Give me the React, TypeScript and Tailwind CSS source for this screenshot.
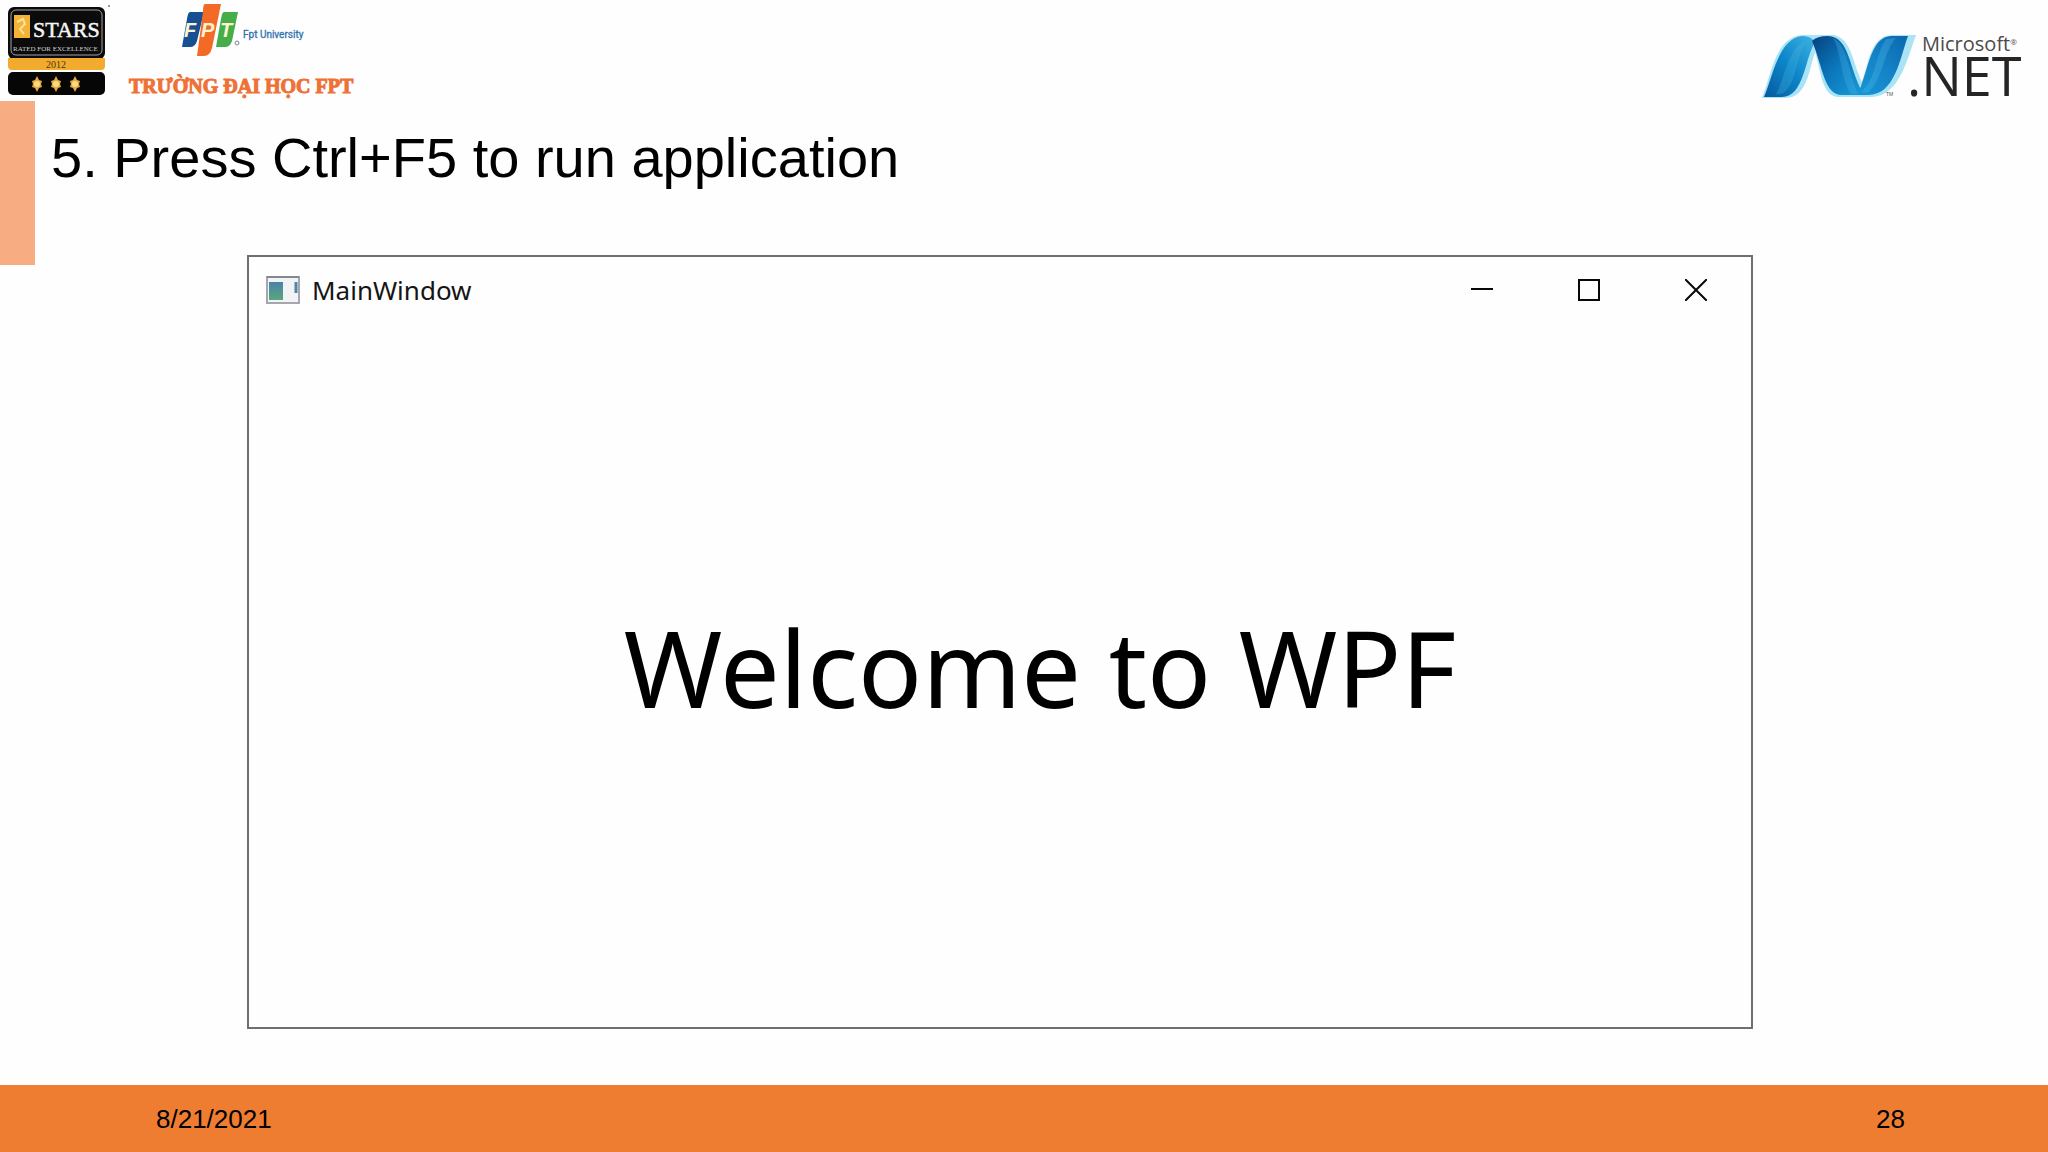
import type { ReactNode } from "react";

const slide = {
  heading: "5. Press Ctrl+F5 to run application",
  date: "8/21/2021",
  page: 28,
};

function StarsBadge() {
  return (
    <svg viewBox="0 0 112 100" className="h-[100px] w-28 shrink-0" role="img" aria-label="Stars rated for excellence 2012">
      <rect x="8" y="7" width="97" height="52" rx="6" fill="#0b0b0b" />
      <rect x="11" y="10" width="91" height="45" rx="5" fill="none" stroke="#a3a3a3" strokeWidth="1" />
      <rect x="14" y="15" width="16" height="23" fill="#f5b335" />
      <path d="M17 22l6-3 2 5-5 5 4 5" fill="none" stroke="#fbe2a4" strokeWidth="2" />
      <text x="33" y="37" fontFamily="Liberation Serif, serif" fontSize="22" fill="#f5f5f5" stroke="#f5f5f5" strokeWidth="0.5">STARS</text>
      <text x="13" y="51" fontFamily="Liberation Serif, serif" fontSize="7" fill="#cfcfcf">RATED FOR EXCELLENCE</text>
      <path d="M8 58h97v8q0 4-4 4H12q-4 0-4-4z" fill="#f3ab2e" />
      <text x="46" y="68" fontFamily="Liberation Serif, serif" fontSize="10" fill="#4a3510">2012</text>
      <rect x="8" y="72" width="97" height="23" rx="5" fill="#060606" />
      {[37, 56, 75].map((x) => (
        <g key={x} transform={`translate(${x} 84)`}>
          <path d="M0-8l2 4 3 1-1 3 1 3-3 1-2 4-2-4-3-1 1-3-1-3 3-1z" fill="#e9a93a" />
          <circle r="3" fill="#f9dc86" />
        </g>
      ))}
      <circle cx="109" cy="6" r="1" fill="#777777" />
    </svg>
  );
}

function FptLogo() {
  return (
    <svg viewBox="112 0 260 104" className="h-[104px] w-[260px] shrink-0" role="img" aria-label="FPT University">
      <path d="M190 12h14l-7 29q-2 6-7 6h-8l5-28q1-7 3-7z" fill="#164f92" />
      <path d="M224 12h14l-6 29q-2 6-7 6h-9l5-28q1-7 3-7z" fill="#45ad49" />
      <path d="M205 4h16l-9 44q-2 8-8 8h-7l6-44q0-8 2-8z" fill="#f26a26" />
      <g fontFamily="Liberation Sans, sans-serif" fontWeight="700" fontStyle="italic" fontSize="20" fill="#fdf4cf">
        <text x="184" y="37">F</text>
        <text x="201" y="37">P</text>
        <text x="220" y="37">T</text>
      </g>
      <circle cx="237" cy="43" r="2" fill="none" stroke="#7a8793" strokeWidth="1" />
      <text x="243" y="38" fontFamily="Roboto, sans-serif" fontSize="10" fill="#2f74ad" stroke="#2f74ad" strokeWidth="0.3">Fpt University</text>
      <text
        x="129"
        y="93"
        fontFamily="Liberation Serif, serif"
        fontWeight="700"
        fontSize="20"
        fill="#ee7135"
        stroke="#ee7135"
        strokeWidth="1"
      >
        TRƯỜNG ĐẠI HỌC FPT
      </text>
    </svg>
  );
}

function DotNetLogo() {
  return (
    <svg viewBox="1760 20 270 100" className="h-[100px] w-[270px] shrink-0" role="img" aria-label="Microsoft .NET">
      <defs>
        <linearGradient id="ribbonLeft" x1="0" y1="1" x2="1" y2="0">
          <stop offset="0" stopColor="#08589f" />
          <stop offset="0.5" stopColor="#0c86c9" />
          <stop offset="1" stopColor="#3fb2e2" />
        </linearGradient>
        <linearGradient id="ribbonMiddle" x1="0" y1="0" x2="1" y2="1">
          <stop offset="0" stopColor="#06417f" />
          <stop offset="0.5" stopColor="#0b78bd" />
          <stop offset="1" stopColor="#1c9bd6" />
        </linearGradient>
        <linearGradient id="ribbonRight" x1="0" y1="1" x2="1" y2="0">
          <stop offset="0" stopColor="#1597d5" />
          <stop offset="0.5" stopColor="#1583c7" />
          <stop offset="1" stopColor="#0a67ae" />
        </linearGradient>
      </defs>
      {/* pale edges behind the ribbon */}
      <path d="M1762 98C1771 76 1775 36 1803 35H1833C1852 38 1852 62 1862 82C1869 63 1870 36 1892 35H1916C1908 56 1900 97 1871 97H1838C1822 96 1821 72 1815 52C1808 75 1806 97 1786 98z" fill="#a9e3f6" />
      <path d="M1764 97C1773 76 1779 37 1803 36Q1811 36 1815 42C1805 58 1804 97 1782 97z" fill="url(#ribbonLeft)" />
      <path d="M1776 94C1786 76 1788 47 1806 41C1795 58 1797 87 1781 94z" fill="#49b6e2" opacity="0.3" />
      <path d="M1812 41Q1817 36 1828 36C1850 37 1849 69 1862 91L1864 95H1842C1824 95 1823 67 1812 41z" fill="url(#ribbonMiddle)" />
      <path d="M1833 38C1847 43 1848 71 1858 94H1851C1840 77 1842 54 1833 38z" fill="#48b7e5" opacity="0.3" />
      <path d="M1861 86C1869 65 1872 37 1891 36H1908C1900 58 1895 95 1868 95H1855Q1859 93 1861 86z" fill="url(#ribbonRight)" />
      <path d="M1867 93C1883 81 1883 52 1896 38L1886 39C1876 53 1876 80 1861 92z" fill="#54c1ec" opacity="0.3" />
      <text x="1886" y="96" fontFamily="Liberation Sans, sans-serif" fontSize="5" fill="#555555">TM</text>
      <text fontFamily="Open Sans, sans-serif" fill="#252525">
        <tspan x="1922" y="51" fontSize="20" fill="#4a4a4a">Microsoft</tspan>
        <tspan y="45" fontSize="8" fill="#4a4a4a">®</tspan>
        <tspan x="1907" y="96" fontSize="54">.NET</tspan>
      </text>
    </svg>
  );
}

function WindowIcon() {
  return (
    <svg viewBox="0 0 34 28" className="h-7 w-[34px]" aria-hidden="true">
      <rect x="1" y="1" width="32" height="26" fill="#f2f3f5" stroke="#a4a6b0" strokeWidth="2" />
      <path d="M1 1h32" stroke="#858894" strokeWidth="2" />
      <defs>
        <linearGradient id="windowPane" x1="0" y1="0" x2="0" y2="1">
          <stop offset="0" stopColor="#4d82a8" />
          <stop offset="1" stopColor="#59a67d" />
        </linearGradient>
      </defs>
      <rect x="3" y="6" width="14" height="18" fill="url(#windowPane)" />
      <path d="M30 6v11" stroke="#5584a5" strokeWidth="3" />
    </svg>
  );
}

function CaptionButton({ label, children }: { label: string; children: ReactNode }) {
  return (
    <button type="button" aria-label={label} className="flex h-full w-[107px] items-center justify-center">
      <svg viewBox="0 0 22 22" className="h-[22px] w-[22px]" fill="none" stroke="#080808" strokeWidth="2">
        {children}
      </svg>
    </button>
  );
}

function MainWindow() {
  return (
    <section className="mr-[295px] ml-[247px] flex flex-1 flex-col border-2 border-[#706d73] font-['Noto_Sans',sans-serif]">
      <div className="flex h-[66px] items-center pr-0.5 pl-[17px]">
        <WindowIcon />
        <h2 className="ml-3 text-[26px] leading-8 text-[#151515]">MainWindow</h2>
        <div className="ml-auto flex h-full">
          <CaptionButton label="Minimize">
            <path d="M0 10h22" />
          </CaptionButton>
          <CaptionButton label="Maximize">
            <rect x="1" y="1" width="20" height="20" />
          </CaptionButton>
          <CaptionButton label="Close">
            <path d="M0 0l22 22M22 0L0 22" />
          </CaptionButton>
        </div>
      </div>
      <div className="flex flex-1 items-center justify-center pb-4 pl-20">
        <p className="text-[106px] leading-[148px] whitespace-nowrap text-black">Welcome to WPF</p>
      </div>
    </section>
  );
}

export default function App() {
  return (
    <div className="flex min-h-screen flex-col bg-[#fefefe] font-['Liberation_Sans',sans-serif] text-black">
      <header className="flex h-[101px] items-start justify-between pr-[18px]">
        <div className="flex">
          <StarsBadge />
          <FptLogo />
        </div>
        <div className="pt-5">
          <DotNetLogo />
        </div>
      </header>

      <main className="flex flex-1 flex-col pb-14">
        <div className="flex h-[154px] items-start">
          <div className="h-[164px] w-[35px] shrink-0 bg-[#f7ad81]" />
          <h1 className="pt-[25px] pl-4 text-[56px] leading-[64px]">{slide.heading}</h1>
        </div>
        <MainWindow />
      </main>

      <footer className="flex h-[67px] items-center justify-between bg-[#ef7d31] pr-[143px] pl-[156px] text-[26px] leading-8">
        <time dateTime="2021-08-21">{slide.date}</time>
        <span>{slide.page}</span>
      </footer>
    </div>
  );
}
